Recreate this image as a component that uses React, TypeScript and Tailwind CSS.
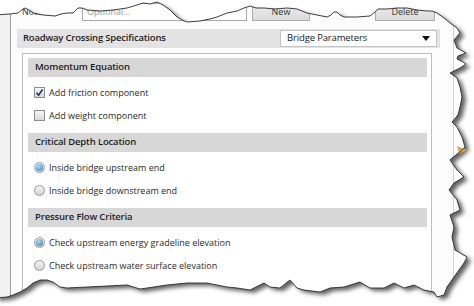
import React from "react";

const PTS: [number, number][] = [
  [-5, 15], [10, 14], [18, 13], [23, 9], [25, 8], [29, 10], [33, 13], [43, 15], [55, 16], [61, 14], [67, 13], [73, 13], [78, 8], [82, 8], [87, 10], [100, 11], [113, 10], [127, 8], [137, 5], [143, 3], [150, 4], [157, 2], [163, 5], [170, 10], [177, 17], [182, 20], [187, 22], [200, 21], [210, 19], [217, 17], [227, 13], [237, 11], [244, 8], [250, 6], [256, 8], [264, 8], [275, 9], [287, 8], [297, 9], [307, 13], [317, 15], [327, 17], [331, 15], [334, 12], [337, 12], [340, 15], [344, 17], [357, 17], [370, 16], [375, 12], [378, 9], [387, 9], [397, 8], [407, 8], [417, 10], [427, 11], [432, 11], [437, 13], [444, 18], [450, 23], [457, 28], [460, 33], [454, 40], [457, 48], [466, 53], [458, 56], [457, 59], [463, 62], [466, 64], [460, 68], [450, 73], [457, 78], [460, 87], [462, 97], [460, 107], [458, 115], [452, 122], [457, 127], [462, 137], [465, 147], [460, 152], [452, 158], [450, 160], [457, 170], [464, 177], [454, 183], [449, 190], [457, 200], [460, 210], [450, 215], [454, 227], [452, 237], [455, 250], [467, 257], [464, 263], [454, 277], [447, 287], [444, 295], [437, 297], [434, 292], [424, 290], [414, 285], [404, 288], [394, 283], [384, 288], [370, 288], [360, 282], [344, 287], [330, 288], [320, 292], [304, 290], [297, 288], [290, 280], [280, 288], [270, 287], [264, 283], [250, 290], [237, 288], [227, 287], [207, 283], [187, 283], [167, 285], [147, 288], [140, 289], [127, 285], [107, 286], [87, 287], [67, 288], [60, 287], [53, 282], [47, 280], [40, 280], [33, 283], [27, 288], [20, 292], [13, 295], [7, 297], [-5, 298],
];

const polyD = "M" + PTS.map((p) => `${p[0]} ${p[1]}`).join(" L") + " Z";
const outsideD = "M-10 -10 H490 V320 H-10 Z " + polyD;

function CheckBox({ checked }: { checked: boolean }) {
  return (
    <span className="w-[11px] h-[11px] shrink-0 border border-[#8e8e8e] bg-gradient-to-b from-[#f6f6f6] to-[#d9d9d9] flex items-center justify-center">
      {checked && (
        <svg width="9" height="9" viewBox="0 0 9 9">
          <path d="M1.5 4.8 L3.6 7.2 L7.6 1.4" fill="none" stroke="#1d2f5e" strokeWidth="1.6" />
        </svg>
      )}
    </span>
  );
}

function Radio({ checked }: { checked: boolean }) {
  return (
    <span className="w-[11px] h-[11px] shrink-0 rounded-full border border-[#9a9a9a] bg-gradient-to-b from-[#f4f4f4] to-[#d4d4d4] flex items-center justify-center">
      {checked && (
        <span className="w-[7px] h-[7px] rounded-full bg-[radial-gradient(circle_at_40%_35%,#a8dcf6,#2b7bbb)]" />
      )}
    </span>
  );
}

function Bar({ children }: { children: React.ReactNode }) {
  return (
    <div className="h-[19px] bg-[#d7d7d7] flex items-center pl-[7px] text-[9.5px] tracking-[-0.15px] font-semibold text-[#1e1e1e]">
      {children}
    </div>
  );
}

function Row({ children, ctrl }: { children: React.ReactNode; ctrl: React.ReactNode }) {
  return (
    <div className="h-[23px] flex items-center pl-[6px] gap-[4px] text-[9px] text-[#2a2a2a]">
      {ctrl}
      <span>{children}</span>
    </div>
  );
}

function Section({ title, children }: { title: string; children: React.ReactNode }) {
  return (
    <div className="flex flex-col">
      <Bar>{title}</Bar>
      <div className="pt-[4px] pb-[6px] flex flex-col">{children}</div>
    </div>
  );
}

export default function App() {
  return (
    <div className="relative w-[474px] h-[306px] overflow-hidden bg-white font-['Open_Sans',sans-serif]">
      <div className="flex h-full">
        <div className="w-[10px] shrink-0 bg-[#f2f2f2]" />
        <div className="w-[444px] shrink-0 h-full border-l border-l-[#9c9c9c] border-r border-r-[#d2d2d2] bg-[#fcfcfc] flex flex-col">
          <div className="flex items-center h-[18px] mt-[3px] pl-[11px] text-[9px]">
            <span className="w-[60px] text-[#333]">Notes:</span>
            <div className="w-[165px] h-[18px] border border-[#a9a9a9] bg-white flex items-center pl-[4px] text-[#9a9a9a]">
              Optional...
            </div>
            <div className="ml-[5px] w-[58px] h-[17px] border border-[#adadad] bg-gradient-to-b from-[#eeeeee] to-[#dadada] flex items-center justify-center text-[#333]">
              New
            </div>
            <div className="ml-[65px] w-[60px] h-[17px] border border-[#adadad] bg-gradient-to-b from-[#eeeeee] to-[#dadada] flex items-center justify-center text-[#333]">
              Delete
            </div>
          </div>

          <div className="mt-[8px] ml-[6px] w-[423px] h-[19px] bg-[#e3e3e3] flex items-center justify-between pl-[6px] pr-[3px]">
            <span className="text-[9.5px] tracking-[-0.2px] font-semibold text-[#1e1e1e]">Roadway Crossing Specifications</span>
            <div className="w-[157px] h-[17px] bg-white border border-[#c4c4c4] flex items-center justify-between pl-[6px] pr-[6px] text-[9.5px] tracking-[-0.15px] text-[#222]">
              <span>Bridge Parameters</span>
              <svg width="8" height="5" viewBox="0 0 8 5">
                <path d="M0 0 H8 L4 5 Z" fill="#111" />
              </svg>
            </div>
          </div>

          <div className="mt-[5px] ml-[11px] w-[410px] flex-1 border border-b-0 border-[#bdbdbd] bg-white pt-[4px] pl-[5px] pr-[4px] flex flex-col">
            <Section title="Momentum Equation">
              <Row ctrl={<CheckBox checked />}>Add friction component</Row>
              <Row ctrl={<CheckBox checked={false} />}>Add weight component</Row>
            </Section>
            <Section title="Critical Depth Location">
              <Row ctrl={<Radio checked />}>Inside bridge upstream end</Row>
              <Row ctrl={<Radio checked={false} />}>Inside bridge downstream end</Row>
            </Section>
            <Section title="Pressure Flow Criteria">
              <Row ctrl={<Radio checked />}>Check upstream energy gradeline elevation</Row>
              <Row ctrl={<Radio checked={false} />}>Check upstream water surface elevation</Row>
            </Section>
          </div>
        </div>
      </div>

      <svg className="absolute inset-0" width="474" height="306" viewBox="0 0 474 306">
        <defs>
          <clipPath id="outside">
            <path d={outsideD} clipRule="evenodd" />
          </clipPath>
          <filter id="blur" x="-10%" y="-10%" width="120%" height="120%">
            <feGaussianBlur stdDeviation="2.2" />
          </filter>
        </defs>
        <path d={outsideD} fill="#ffffff" fillRule="evenodd" />
        <g clipPath="url(#outside)">
          <path d={polyD} fill="#3a3a3a" opacity="0.8" filter="url(#blur)" transform="translate(4 3)" />
        </g>
        <path d="M457 146 L467 150 L459 154 Z" fill="#d6a656" />
        <path d={polyD} fill="none" stroke="#2b2b2b" strokeWidth="0.9" strokeLinejoin="round" />
      </svg>
    </div>
  );
}
